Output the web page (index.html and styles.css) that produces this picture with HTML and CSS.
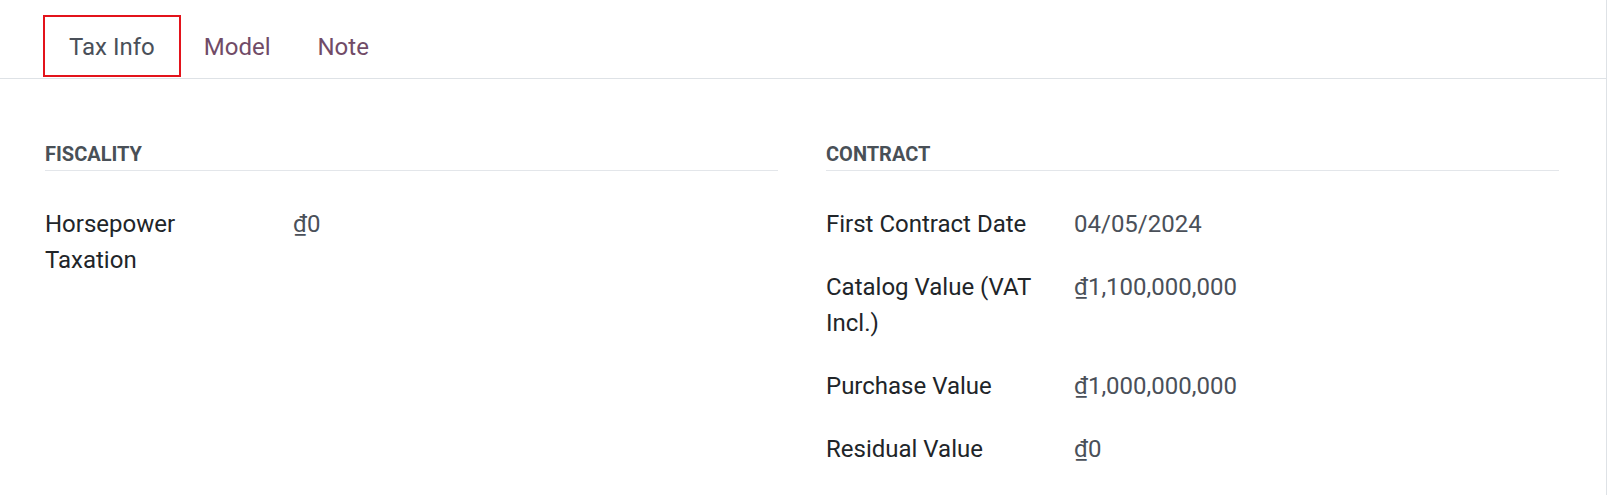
FILE: index.html
```html
<!DOCTYPE html>
<html>
<head>
<meta charset="utf-8">
<link rel="stylesheet" href="styles.css">
</head>
<body>
<div class="sheet">
  <div class="tabs">
    <div class="tab active">Tax Info</div>
    <div class="tab">Model</div>
    <div class="tab">Note</div>
  </div>
  <div class="content">
    <div class="group">
      <div class="sep">Fiscality</div>
      <div class="rows">
        <div class="row">
          <div class="label">Horsepower Taxation</div>
          <div class="value">₫0</div>
        </div>
      </div>
    </div>
    <div class="group">
      <div class="sep">Contract</div>
      <div class="rows">
        <div class="row">
          <div class="label">First Contract Date</div>
          <div class="value">04/05/2024</div>
        </div>
        <div class="row">
          <div class="label">Catalog Value (VAT Incl.)</div>
          <div class="value">₫1,100,000,000</div>
        </div>
        <div class="row">
          <div class="label">Purchase Value</div>
          <div class="value">₫1,000,000,000</div>
        </div>
        <div class="row">
          <div class="label">Residual Value</div>
          <div class="value">₫0</div>
        </div>
      </div>
    </div>
  </div>
</div>
</body>
</html>
```
FILE: styles.css
```css
html, body {
  margin: 0;
  padding: 0;
  background: #ffffff;
}
body {
  font-family: Roboto, "Liberation Sans", sans-serif;
  font-size: 24px;
  line-height: 36px;
  color: #212529;
}
.sheet {
  width: 1607px;
  height: 495px;
  border-right: 1px solid #dee2e6;
  box-sizing: border-box;
}
.tabs {
  display: flex;
  padding: 15px 0 1px 43px;
  border-bottom: 1px solid #dee2e6;
}
.tab {
  padding: 14px 24px 12px 23px;
  color: #714b67;
}
.tab.active {
  padding: 12px 24px 10px 24px;
  border: 2px solid #e3131b;
  color: #4a5059;
}
.content {
  display: grid;
  grid-template-columns: 733px 733px;
  column-gap: 48px;
  padding: 59px 0 0 45px;
}
.sep {
  font-size: 20px;
  line-height: 32px;
  font-weight: bold;
  text-transform: uppercase;
  color: #495057;
  border-bottom: 1px solid #e3e6ea;
}
.rows {
  display: flex;
  flex-direction: column;
  gap: 27px;
  padding-top: 35px;
}
.row {
  display: flex;
}
.label {
  width: 218px;
  padding-right: 30px;
  flex: none;
}
.value {
  color: #4a5059;
}
```
